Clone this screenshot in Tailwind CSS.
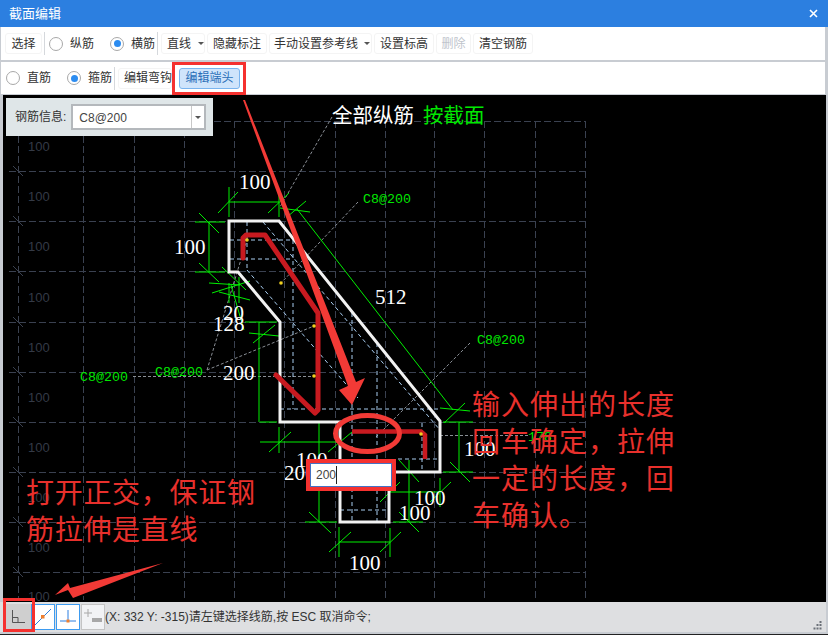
<!DOCTYPE html>
<html lang="en">
<head>
  <meta charset="UTF-8">
  <title>截面编辑</title>
  <script src="https://cdn.jsdelivr.net/npm/@tailwindcss/browser@4"></script>
</head>
<body class="w-[828px] h-[635px] overflow-hidden bg-[#c8ccd2] font-['Liberation_Sans','Noto_Sans_CJK_SC',sans-serif] text-[12px] text-[#333]">

  <!-- title bar -->
  <header class="h-[27px] bg-[#2c7fe0] flex items-center justify-between pl-[9px] pr-[10px] text-white text-[13px]">
    <span>截面编辑</span>
    <svg class="w-[9px] h-[9px]" viewBox="0 0 9 9"><path d="M1 1l7 7M8 1l-7 7" stroke="#fff" stroke-width="1.6"/></svg>
  </header>

  <div class="pl-[1px] pr-[3px]">
    <!-- toolbar 1 -->
    <div class="h-[33px] bg-white flex items-center pl-[4px] gap-[2px] whitespace-nowrap">
      <button class="w-[37px] h-[21px] border border-[#f4f4f4] rounded-[3px]">选择</button>
      <div class="w-px h-[23px] bg-[#d5d8dc]"></div>
      <label class="flex items-center ml-[2px] w-[61px] gap-[7px]"><span class="w-[14px] h-[14px] rounded-full border border-[#a8a8a8]"></span>纵筋</label>
      <label class="flex items-center ml-[-2px] gap-[7px]"><span class="w-[14px] h-[14px] rounded-full border border-[#a8a8a8] flex items-center justify-center"><span class="w-[7px] h-[7px] rounded-full bg-[#2c8cf0]"></span></span>横筋</label>
      <div class="w-px h-[23px] bg-[#d5d8dc]"></div>
      <button class="w-[44px] h-[21px] ml-[1px] border border-[#f4f4f4] rounded-[3px] flex items-center pl-[5px] gap-[7px]">直线<span class="border-x-[3px] border-x-transparent border-t-[3px] border-t-[#555]"></span></button>
      <button class="w-[60px] h-[21px] border border-[#f4f4f4] rounded-[3px]">隐藏标注</button>
      <button class="w-[103px] h-[21px] border border-[#f4f4f4] rounded-[3px] flex items-center pl-[4px] gap-[6px]">手动设置参考线<span class="border-x-[3px] border-x-transparent border-t-[3px] border-t-[#555]"></span></button>
      <button class="w-[60px] h-[21px] border border-[#f4f4f4] rounded-[3px]">设置标高</button>
      <button class="w-[35px] h-[21px] border border-[#f4f4f4] rounded-[3px] text-[#c0c4cc]">删除</button>
      <button class="w-[60px] h-[21px] border border-[#f4f4f4] rounded-[3px]">清空钢筋</button>
    </div>
    <div class="h-[2px] bg-[#c8ccd2]"></div>
    <!-- toolbar 2 -->
    <div class="h-[32px] bg-white flex items-center pl-[5px] relative whitespace-nowrap">
      <label class="flex items-center w-[61px] gap-[7px]"><span class="w-[14px] h-[14px] rounded-full border border-[#a8a8a8]"></span>直筋</label>
      <label class="flex items-center gap-[7px]"><span class="w-[14px] h-[14px] rounded-full border border-[#a8a8a8] flex items-center justify-center"><span class="w-[7px] h-[7px] rounded-full bg-[#2c8cf0]"></span></span>箍筋</label>
      <div class="w-px h-[23px] bg-[#d5d8dc] ml-[2px]"></div>
      <button class="w-[54px] h-[21px] ml-[3px] border border-[#f4f4f4] rounded-[3px] text-left pl-[5px]">编辑弯钩</button>
      <button class="w-[61px] h-[21px] ml-[7px] border border-[#7ab4ef] rounded-[3px] bg-[#cfe4fb] text-[#2a6fb8]">编辑端头</button>
      <div class="absolute left-[171px] top-0 w-[74px] h-[33px] border-[3px] border-[#f5312f]"></div>
    </div>
  </div>

  <!-- canvas -->
  <main class="relative ml-[3px] mr-[2px] mt-[1px] h-[507px] bg-black overflow-hidden">
    <svg class="absolute inset-0 w-[823px] h-[507px]" viewBox="3 95 823 507" fill="none">
      <!-- grid -->
      <path stroke="#3a4150" stroke-dasharray="7 3" d="M214 121.500H586M9 171.500H586M9 221.500H586M9 271.500H586M9 322.500H586M9 372.500H586M9 422.500H586M9 472.500H586M9 522.500H586M13 572.500H586
        M18.500 136V600M83.500 136V600M134.500 136V600M184.500 121V600M234.500 121V600M284.500 121V600M335.500 121V600M385.500 121V600M434.500 121V600M484.500 121V600M535.500 121V600M585.500 121V600"/>
      <path stroke="#3a4150" d="M13 166l10 10M13 216l10 10M13 266l10 10M13 317l10 10M13 367l10 10M13 417l10 10M13 467l10 10M13 517l10 10M13 567l10 10"/>
      <g fill="#343a46" class="text-[13px] font-['Liberation_Sans']">
        <text x="28" y="151">100</text><text x="28" y="201">100</text><text x="28" y="251">100</text><text x="28" y="302">100</text><text x="28" y="352">100</text><text x="28" y="402">100</text><text x="28" y="452">100</text><text x="28" y="502">100</text><text x="28" y="552">100</text><text x="28" y="601">100</text>
      </g>

      <!-- leaders -->
      <path stroke="#8a8f96" stroke-dasharray="3 2" d="M332 117L280 207M358 202L281 283M470 343L375 438M207 370L247 240M207 370L314 326M133 376.500H314M440 435.500H528"/>

      <!-- stirrup centre lines -->
      <path stroke="#a8cdf0" stroke-dasharray="4 3" d="M230 240H293M230 259H293M247 222V270M293 240V409M352 313V522M377 343V522M263 222L440 430M247 270L358 398M280 409H440M398 459H438M422 423V473M340 510H388"/>

      <!-- dimensions -->
      <path stroke="#00f000" d="M229 187V217M279 192V217M229 202H279M218 213L238 192M268 213L289 193
        M195 222H225M195 272H225M209 222V272M199 213L219 233M199 263L219 282
        M297 209L453 410M280 208L310 212M287 217L306 201M440 408L470 411M444 423L465 403
        M209 283L240 285M222 267L246 290M212 293L250 281M239 277V303M229 283V303M219 292L250 300M231 285L244 330
        M245 322H277M249 333L279 336M253 343L275 325M259 322V422
        M443 422H473M443 472H473M459 422V472M450 462L470 482
        M260 422H277M305 422H337M319 422V460M319 490V522M305 522H337M309 512L331 533M328 452L352 432M279 427V453M260 442H338M269 452L291 432
        M339 542H390M339 527V557M390 528V557M329 552L351 532M380 552L401 532
        M390 492H440M409 460V522M440 478V507M380 502L400 482M399 460L419 482M430 502L451 482M399 512L419 532M393 522H423M400 472H423M389 492V522"/>

      <!-- section outline -->
      <path stroke="#f2f2f2" stroke-width="3" d="M229 221H279L440 421V472H389V522H340V422H280V322L238 272H229Z"/>

      <!-- rebar -->
      <path stroke="#c81a20" stroke-width="5" stroke-linejoin="round" stroke-linecap="round" d="M243 258V238L246 235H265L318 313V410L315 413L276 375"/>
      <path stroke="#c81a20" stroke-width="4.500" d="M352 431.500H421L425 435V459"/>

      <!-- rebar points -->
      <g fill="#f0d020"><circle cx="247" cy="240" r="1.800"/><circle cx="281" cy="283" r="1.800"/><circle cx="314" cy="326" r="1.800"/><circle cx="314" cy="376" r="1.800"/><circle cx="421" cy="434" r="1.800"/></g>

      <!-- dimension values -->
      <g fill="#fff" class="text-[21px] font-['Liberation_Serif']">
        <text x="239" y="189">100</text><text x="174" y="254">100</text><text x="375" y="304">512</text><text x="223" y="320">20</text><text x="213" y="331">128</text><text x="223" y="380">200</text>
        <text x="464" y="456">100</text><text x="414" y="505">100</text><text x="399" y="520">100</text><text x="349" y="570">100</text><text x="284" y="480">200</text><text x="296" y="467">100</text>
      </g>
      <g fill="#00e800" class="text-[13.300px] font-['Liberation_Mono']">
        <text x="363" y="203">C8@200</text><text x="477" y="344">C8@200</text><text x="80" y="381">C8@200</text><text x="155" y="376">C8@200</text><text x="528" y="441">178</text>
      </g>

      <!-- annotations -->
      <text x="332" y="123" fill="#fff" class="text-[20.500px] font-['Noto_Sans_CJK_SC']">全部纵筋</text>
      <text x="423" y="123" fill="#00e800" class="text-[20.500px] font-['Noto_Sans_CJK_SC']">按截面</text>
      <path fill="#f23a36" d="M243 100L245 100L356 382L365 378L352 405L339 390L348 386Z"/>
      <ellipse cx="367.500" cy="433.500" rx="32" ry="18" stroke="#f23a36" stroke-width="5"/>
      <path fill="#f23a36" d="M163 563L73 598L68 590L55 595L68 583L70 588Z"/>
    </svg>

    <!-- rebar info panel -->
    <div class="absolute left-[3px] top-[3px] w-[207px] h-[38px] bg-[#dfe6e8] flex items-center pl-[9px] gap-[5px]">
      <span class="text-[#333]">钢筋信息:</span>
      <div class="w-[135px] h-[26px] border-2 border-[#b4b8bc] bg-white flex items-center justify-between">
        <span class="pl-[6px] pt-[1px] text-[12px] text-[#444]">C8@200</span>
        <span class="w-[13px] h-full border-l border-[#c8c8c8] flex items-center justify-center"><span class="border-x-[3px] border-x-transparent border-t-[3px] border-t-[#555]"></span></span>
      </div>
    </div>

    <!-- length input -->
    <div class="absolute left-[303px] top-[364px] w-[90px] h-[32px] border-[4px] border-[#f5312f]">
      <div class="w-full h-full bg-white border border-[#4472c4] flex items-center pl-[5px] text-[12px] text-[#444]">200<span class="w-px h-[18px] bg-[#222]"></span></div>
    </div>

    <!-- red notes -->
    <p class="absolute left-[469px] top-[290px] w-[215px] text-[28px] leading-[37px] tracking-[1px] text-[#e8302c] font-['Noto_Sans_CJK_SC']">输入伸出的长度<br>回车确定&#xFF0C;拉伸<br>一定的长度&#xFF0C;回<br>车确认。</p>
    <p class="absolute left-[23px] top-[378px] w-[240px] text-[28px] leading-[37px] tracking-[0.700px] text-[#e8302c] font-['Noto_Sans_CJK_SC']">打开正交&#xFF0C;保证钢<br>筋拉伸是直线</p>
  </main>

  <!-- status bar -->
  <footer class="relative mr-[2px] h-[30px] bg-[#dedfe1] flex items-center pl-[6px] text-[12px] text-[#333] whitespace-nowrap">
    <button class="w-[25px] h-[26px] bg-[#cfcfcf] flex items-center justify-center">
      <svg class="w-[14px] h-[14px]" viewBox="0 0 14 14" fill="none"><path d="M0.500 0V12.500H13M0.500 7.500H6V12" stroke="#555"/></svg>
    </button>
    <button class="w-[24px] h-[26px] bg-white border border-[#3d9bf0] flex items-center justify-center">
      <svg class="w-[18px] h-[18px]" viewBox="0 0 18 18" fill="none"><path d="M1 17L17 1" stroke="#2c7fe0"/><rect x="7" y="7" width="3.500" height="3.500" fill="#f08030"/></svg>
    </button>
    <button class="w-[24px] h-[26px] ml-[1px] bg-white border border-[#3d9bf0] flex items-center justify-center">
      <svg class="w-[18px] h-[18px]" viewBox="0 0 18 18" fill="none"><path d="M9 2V13M1 13H17" stroke="#2c7fe0"/><rect x="7.500" y="11.500" width="3" height="3" fill="#f08030"/></svg>
    </button>
    <button class="w-[24px] h-[26px] ml-[1px] bg-[#f2f3f5] border border-[#c4c4c4] flex items-center justify-center">
      <svg class="w-[20px] h-[18px]" viewBox="0 0 20 18" fill="none"><path d="M5 1V9M1 5H9" stroke="#a8a8a8"/><rect x="9" y="10" width="10" height="4" fill="#a8a8a8"/></svg>
    </button>
    <span>(X: 332 Y: -315)请左键选择线筋,按 ESC 取消命令;</span>
    <div class="absolute left-[3px] top-[-4px] w-[32px] h-[34px] border-[3px] border-[#f5312f]"></div>
    <!-- resize grip -->
    <svg class="absolute right-[4px] bottom-[2px] w-[9px] h-[9px]" viewBox="0 0 9 9"><path fill="#6b7078" d="M6.500 0h2v2h-2zM3.500 3h2v2h-2zM6.500 3h2v2h-2zM0.500 6.500h2v2h-2zM3.500 6.500h2v2h-2zM6.500 6.500h2v2h-2z"/></svg>
  </footer>
  <div class="h-[2px]"></div>
  <div class="h-px bg-[#222]"></div>
</body>
</html>
